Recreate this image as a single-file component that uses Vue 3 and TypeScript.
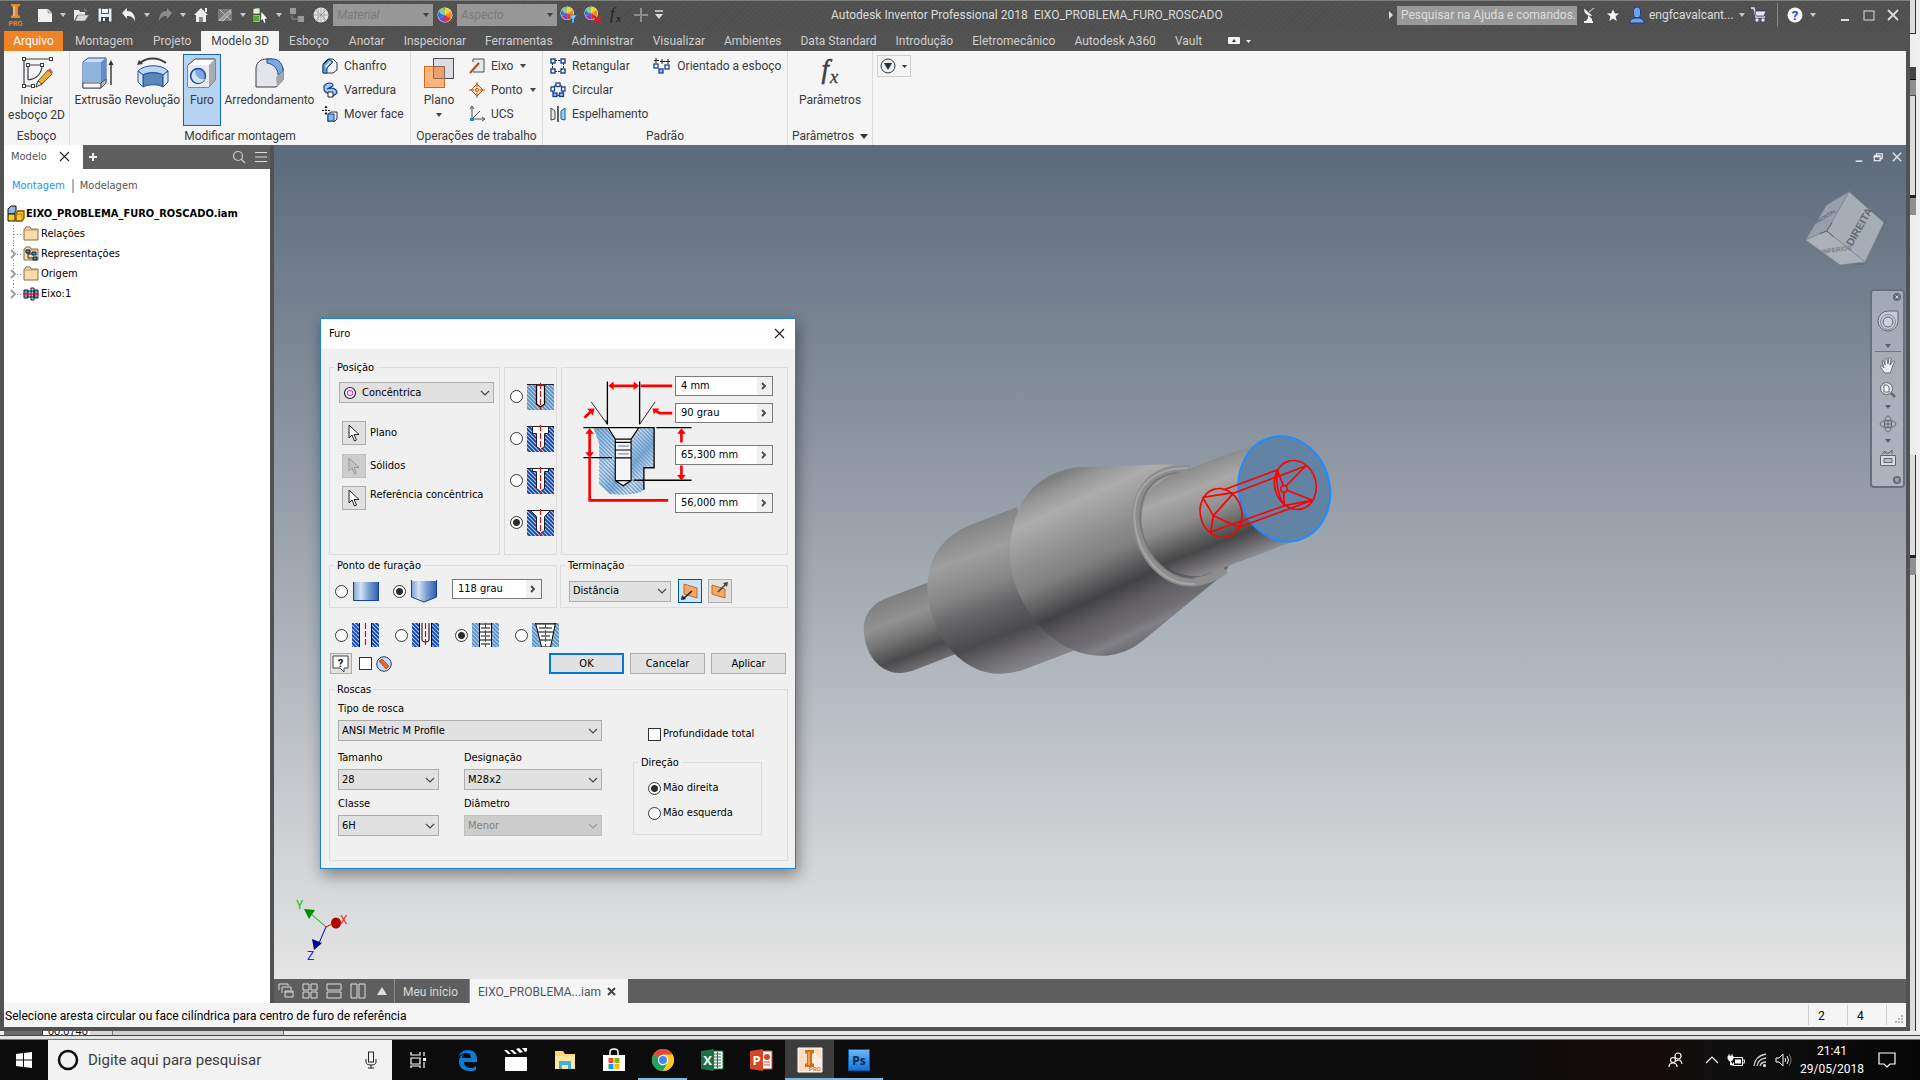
<script setup lang="ts">
import { h, ref } from 'vue'

type Glyph = [number, number, string]

const wheelSlices =
  '<circle cx="8" cy="8" r="7.5" fill="#eee"/><path d="M8 8V1A7 7 0 0 1 14 4.5Z" fill="#f5d21b"/><path d="M8 8L14 4.5A7 7 0 0 1 14 11.5Z" fill="#f08a1d"/><path d="M8 8L14 11.5A7 7 0 0 1 8 15Z" fill="#e0352b"/><path d="M8 8V15A7 7 0 0 1 2 11.5Z" fill="#8b3fc0"/><path d="M8 8L2 11.5A7 7 0 0 1 2 4.5Z" fill="#2f6fe0"/><path d="M8 8L2 4.5A7 7 0 0 1 8 1Z" fill="#46b535"/><circle cx="6" cy="5" r="3" fill="#fff" opacity=".35"/>'
const folder = '<path d="M1 3h1l1-2h4l1 2h7v11H1z" fill="#f7dda9" stroke="#8a6a45"/><path d="M1 4h14" stroke="#b8935d"/>'
const centreLine = '<path d="M13.500 0v27" stroke="#f00" stroke-width="1.200" stroke-dasharray="6 2"/>'

const glyphs: Record<string, Glyph> = {
  logo: [20, 24, '<path d="M5 1h9v2l-2 1v8l2 1v2H5v-2l2-1V4L5 3z" fill="#e08a2e"/><path d="M7 3h2v10H7z" fill="#f7b566"/><text x="9.500" y="23" text-anchor="middle" font-family="Roboto" font-weight="700" font-size="7" fill="#e08a2e">PRO</text>'],
  newdoc: [16, 16, '<path d="M1 2h10l4 4v9H1z" fill="#f1f1f4"/><path d="M11 2v4h4" fill="#c9c9d2" stroke="#8a8a92" stroke-width=".6"/>'],
  caret: [8, 8, '<path d="M1 2h6L4 6z" fill="#c9c9c9"/>'],
  open: [16, 16, '<path d="M1 3h5l1 2h5v3H4l-3 6z" fill="#e8e8e8"/><path d="M5 8h11l-4 6H2z" fill="#d9d9de" stroke="#555" stroke-width=".5"/><path d="M11 2l3 2" stroke="#7fb2e8"/>'],
  save: [16, 16, '<path d="M1 1h14v14H1z" fill="#e9eef2" stroke="#3f4a55"/><path d="M4 1h8v6H4z" fill="#4c5b68"/><path d="M5 2h6v4H5z" fill="#fff"/><path d="M4 10h8v5H4z" fill="#3c4650"/><path d="M6 11h2v3H6z" fill="#fff"/>'],
  undo: [16, 16, '<path d="M1 6l5-5v3c5 0 8 3 8 10-2-4-4-5-8-5v3z" fill="#f2f2f2"/>'],
  redo: [16, 16, '<path d="M15 6l-5-5v3c-5 0-8 3-8 10 2-4 4-5 8-5v3z" fill="#8b8b8b"/>'],
  home: [16, 16, '<path d="M8 1l7 7h-2v7H3V8H1z" fill="#ededed"/><path d="M6 10h4v5H6z" fill="#8c8c8c"/><path d="M12 1h2v4h-2z" fill="#ededed"/>'],
  bolt: [16, 16, '<path d="M1 2h14v12H1z" fill="#7a7a7a"/><path d="M2 13L13 3l1 3-8 8zM3 3l5 5M9 9l5 4" stroke="#bbb" fill="#9a9a9a"/>'],
  select3d: [18, 16, '<path d="M1 2l3-1h4v6H1zM1 8h7v7H1z" fill="#e2ecd9" stroke="#3b5a2a" stroke-width=".7"/><path d="M1 9h6v5H1z" fill="#58a43b"/><path d="M9 4l7 8h-3l1 4-2 .5-1.500-4L8.500 14z" fill="#fff" stroke="#333" stroke-width=".7"/>'],
  parts: [16, 16, '<path d="M1 1h6v6H1zM9 9h6v6H9z" fill="#9a9a9a"/><path d="M3 8v4h4" stroke="#8a8a8a" fill="none"/><circle cx="9" cy="12" r="1.500" fill="#8a8a8a"/>'],
  globe: [16, 16, '<circle cx="8" cy="8" r="7.500" fill="#e2e2e2"/><path d="M8 1v14M1 8h14M3 3l10 10M13 3L3 13M5 2v12M11 2v12" stroke="#8a8a8a" stroke-width=".6"/>'],
  wheel: [18, 18, '<g transform="translate(1 1)">' + wheelSlices + '</g>'],
  wheelDown: [18, 18, '<g transform="scale(.9)">' + wheelSlices + '</g><path d="M9 9h8l-3 4v4h-2v-4z" fill="#7fd0ff" stroke="#1b5a86" stroke-width=".6"/>'],
  wheelX: [18, 18, '<g transform="scale(.9)">' + wheelSlices + '</g><path d="M10 10l7 7m0-7l-7 7" stroke="#e01b1b" stroke-width="2"/>'],
  fxsmall: [18, 18, '<text x="2" y="13" font-family="Liberation Serif" font-style="italic" font-size="16" fill="#222">f</text><text x="8" y="16" font-family="Liberation Serif" font-style="italic" font-weight="700" font-size="10" fill="#222">x</text>'],
  plusbig: [16, 16, '<path d="M8 1v14M1 8h14" stroke="#8d8d8d" stroke-width="2"/>'],
  menuCaret: [10, 10, '<path d="M1 1h8" stroke="#ddd" stroke-width="1.500"/><path d="M1 4h8L5 9z" fill="#ddd"/>'],
  rightTri: [8, 10, '<path d="M2 1l4 4-4 4z" fill="#ddd"/>'],
  dish: [16, 18, '<path d="M3 2c-1 5 3 9 9 8z" fill="#f2f2f2" stroke="#333" stroke-width=".5"/><path d="M8 6l5-4" stroke="#e4e4e4"/><path d="M7 9l4 4v2H5l2-3z" fill="#f2f2f2"/><path d="M3 15h9v2H3z" fill="#f2f2f2"/>'],
  star: [16, 16, '<path d="M8 1l2 5h5l-4 3.500 1.500 5.500L8 12l-4.500 3L5 9.500 1 6h5z" fill="#f1f3f7" stroke="#2e3440" stroke-width=".7"/>'],
  user: [16, 18, '<rect x="4.500" y="1" width="7" height="11" rx="3.500" fill="#6ea0ef" stroke="#16315e" stroke-width=".8"/><path d="M1 17c0-4 3-5 7-5s7 1 7 5z" fill="#6ea0ef" stroke="#16315e" stroke-width=".8"/>'],
  cart: [16, 16, '<path d="M0 1h3l2 9h9" fill="none" stroke="#e4e6f5" stroke-width="1.500"/><path d="M4 4h11l-2 5H5z" fill="#e4e6f5" stroke="#1d2c6b" stroke-width=".7"/><circle cx="6" cy="13" r="1.700" fill="#e4e6f5"/><circle cx="12" cy="13" r="1.700" fill="#e4e6f5"/>'],
  help: [16, 16, '<circle cx="8" cy="8" r="7.500" fill="#f4f6fa"/><text x="8" y="12.500" text-anchor="middle" font-family="Roboto" font-weight="700" font-size="13" fill="#1e4fb0">?</text>'],
  min: [12, 14, '<path d="M2 12h8" stroke="#ddd" stroke-width="2"/>'],
  max: [12, 14, '<rect x="1" y="3" width="10" height="9" fill="none" stroke="#ddd"/>'],
  restore: [12, 14, '<path d="M4 5V3h7v6H9M1.500 5.500h7v6h-7zM1 6.500h8" fill="none" stroke="#fff" stroke-width="1.300"/>'],
  close: [12, 14, '<path d="M1 2l10 10m0-10L1 12" stroke="#ddd" stroke-width="1.800"/>'],
  closeDark: [12, 12, '<path d="M1 1l9 9m0-9l-9 9" stroke="#222" stroke-width="1.100"/>'],
  closeBold: [10, 10, '<path d="M1 1l7 7m0-7L1 8" stroke="#444" stroke-width="2"/>'],
  ribbonToggle: [26, 10, '<rect x="1" y="1" width="12" height="7" rx="1" fill="#f2f2f2"/><path d="M5 6h4L7 3z" fill="#333"/><path d="M19 4h5l-2.500 3z" fill="#eee"/>'],
  sketch: [34, 32, '<path d="M4 2h27M4 29h9M4 2v27M8 8h14M8 8v15M8 23C17 22 22 16 22 8" fill="none" stroke="#3b3f46" stroke-width="1.200"/><g fill="#fff" stroke="#3b3f46"><rect x="2.500" y=".5" width="3" height="3"/><rect x="29.500" y=".5" width="3" height="3"/><rect x="2.500" y="27.500" width="3" height="3"/><rect x="11.500" y="27.500" width="3" height="3"/><rect x="6.500" y="6.500" width="3" height="3"/><rect x="20.500" y="6.500" width="3" height="3"/></g><path d="M18 24L28 13l4 4-10 10-6 3z" fill="#f2ad2e" stroke="#75511a"/><path d="M28 13l4 4 1-2-3-4z" fill="#d2695b"/><path d="M18 24l-2 6 6-3z" fill="#eee" stroke="#444"/>'],
  extrude: [32, 32, '<path d="M1 5l5-4h18v24l-5 6H1z" fill="#cfe0f5" stroke="#1f4fa3"/><path d="M1 5h18v20H1z" fill="#8fb3de"/><path d="M19 5l5-4v24l-5 3z" fill="#5f8dc9"/><path d="M1 26h18v5H1z" fill="#f3f3f3" stroke="#555"/><path d="M19 26l5-4v4l-5 5z" fill="#bbb" stroke="#555"/><path d="M29 28V6" stroke="#333" stroke-width="1.400"/><path d="M29 3l-2.500 5h5z" fill="#333"/>'],
  revolve: [32, 32, '<path d="M3 6c7-6 18-6 26 0" fill="none" stroke="#3b3f46" stroke-width="2"/><path d="M0 8l2-5 4 4z" fill="#3b3f46"/><path d="M1 14c6-7 24-7 30 0l-5 4c-5-3-15-3-20 0z" fill="#bcd6f2" stroke="#1f4fa3"/><path d="M6 18c5-3 15-3 20 0v12c-5-3-15-3-20 0z" fill="#5c87bb" stroke="#1f4fa3"/><path d="M1 14l5 4v12l-5-5zM31 14l-5 4v12l5-5z" fill="#d7e6f6" stroke="#1f4fa3"/>'],
  hole: [30, 32, '<path d="M1 8l7-6h20v21l-6 7H1z" fill="#fff" stroke="#3b3f46"/><path d="M22 8l6-6v21l-6 7z" fill="#a9abb0"/><path d="M1 8h21v22H1z" fill="#e9ebef"/><circle cx="11" cy="19" r="7.500" fill="#7fa9dc" stroke="#1a4a9b" stroke-width="1.400"/><path d="M8 13a7 7 0 1 0 10 9c-6 1-10-3-10-9z" fill="#cfe3f8"/>'],
  fillet: [32, 32, '<path d="M2 12c0-6 4-10 11-10h5l11 9v12l-7 7H2z" fill="#e4e5e8" stroke="#3b3f46"/><path d="M13 2h6c6 0 10 5 10 12l-5 4c0-7-5-11-11-12z" fill="#7fa9dc" stroke="#1f4fa3"/><path d="M22 20l7-6v10l-6 6z" fill="#a2a4a9"/>'],
  chamfer: [16, 16, '<path d="M1 6l5-5h5l4 4v7l-4 3H1z" fill="#f0f2f5" stroke="#30363f"/><path d="M1 7l6-6 4 3-6 6v5H1z" fill="#6c9bd6" stroke="#173f8a"/><path d="M3 8l5-5 1 1-5 6z" fill="#cfe3f8"/>'],
  sweep: [16, 16, '<path d="M2 4c3-4 9-4 9 0l-6 3c6-2 10 0 10 4l-4 3c0-4-9-1-9-7z" fill="#aac9ec" stroke="#173f8a" stroke-width="1.200"/><path d="M6 10h5v5H6z" fill="#fff" stroke="#222"/>'],
  moveface: [16, 16, '<path d="M6 8l3-2h6v7l-3 3H6z" fill="#f0f0f0" stroke="#333"/><path d="M6 8h6v7H6z" fill="#7fbdf0" stroke="#173f8a"/><path d="M4 0v9M0 4.500h9" stroke="#111" stroke-dasharray="2 1"/><path d="M2.500 2L4 0l1.500 2zM2.500 7L4 9l1.500-2z" fill="#111"/>'],
  plane: [32, 32, '<rect x="10.500" y="1.500" width="20" height="20" fill="#dcdde1" stroke="#4a4e57"/><rect x="1.500" y="9.500" width="20" height="21" fill="#ffb27c" stroke="#d0681e"/><path d="M10.500 9.500h11v12h-11z" fill="#e9a070" stroke="#8b6a54"/>'],
  axis: [16, 16, '<path d="M4 4V1h11v13H4" fill="#e7e9ec" stroke="#4a4e57"/><path d="M1 15L10 5" stroke="#b04c20" stroke-width="2"/>'],
  point: [16, 16, '<path d="M8 2l6 6-6 6-6-6z" fill="#ffd7b5" stroke="#b3541f"/><circle cx="8" cy="8" r="1.500" fill="none" stroke="#b3541f"/><path d="M8 0v5M8 11v5M0 8h5M11 8h5" stroke="#b3541f"/>'],
  ucs: [16, 16, '<path d="M3 1v12h12M3 13l8-8" fill="none" stroke="#4a4e57"/><path d="M1 3l2-3 2 3M13 11l3 2-3 2" fill="none" stroke="#4a4e57"/><path d="M1 12h4v3H1z" fill="#2d7fe0"/>'],
  rectp: [16, 16, '<path d="M5 2.500h6M5 13.500h6M2.500 5v6M13.500 5v6" stroke="#333" stroke-dasharray="2 1"/><g fill="#fff" stroke="#173f8a" stroke-width="1.400"><rect x="1" y="1" width="4" height="4"/><rect x="11" y="1" width="4" height="4"/><rect x="1" y="11" width="4" height="4"/><rect x="11" y="11" width="4" height="4"/></g>'],
  circp: [16, 16, '<circle cx="8" cy="8" r="5.500" fill="none" stroke="#333"/><g fill="#fff" stroke="#173f8a" stroke-width="1.300"><rect x="6" y="1" width="4" height="3.500"/><rect x="1" y="5" width="3.500" height="4"/><rect x="11.500" y="5" width="3.500" height="4"/><rect x="3" y="11" width="4" height="3.500" fill="#8fc0f3"/><rect x="9.500" y="11" width="4" height="3.500" fill="#8fc0f3"/></g>'],
  mirror: [16, 16, '<path d="M8 0v16" stroke="#222" stroke-width="1.400"/><path d="M1 2l4 3v8l-4 1z" fill="#e4e6ea" stroke="#444"/><path d="M15 2l-4 3v8l4 1z" fill="#9fd0f5" stroke="#1f5aa0"/>'],
  sketchp: [18, 16, '<path d="M3 0v5M1 2.500h5M9 1v5M7 3.500h5M15 1v5M12 3.500h5" stroke="#222"/><g fill="#fff" stroke="#173f8a" stroke-width="1.300"><rect x="1" y="6" width="4" height="4"/><rect x="6" y="11" width="4" height="4" fill="#8fc0f3"/><rect x="12" y="7" width="4" height="4"/></g>'],
  fxbig: [36, 38, '<text x="8" y="25" font-family="Liberation Serif" font-style="italic" font-size="32" fill="#3b3f46" stroke="#3b3f46" stroke-width=".6">f</text><text x="18" y="31" font-family="Liberation Serif" font-style="italic" font-size="22" fill="#3b3f46" stroke="#3b3f46" stroke-width=".4">x</text>'],
  dropCircle: [30, 18, '<circle cx="9" cy="9" r="7" fill="#e8ebef" stroke="#333"/><path d="M5 6h8l-4 7z" fill="#26313d"/><path d="M23 8h5l-2.500 3z" fill="#333"/>'],
  caretDark: [8, 6, '<path d="M1 1h6L4 5z" fill="#444"/>'],
  caretWide: [8, 6, '<path d="M0 0h8L4 5z" fill="#333"/>'],
  plusTab: [10, 10, '<path d="M5 1v8M1 5h8" stroke="#eee" stroke-width="2"/>'],
  search: [14, 14, '<circle cx="6" cy="6" r="4.500" fill="none" stroke="#ccc" stroke-width="1.200"/><path d="M9 9l4 4" stroke="#ccc" stroke-width="1.200"/>'],
  burger: [14, 12, '<path d="M1 1.500h12M1 6h12M1 10.500h12" stroke="#ddd" stroke-width="1.200"/>'],
  asm: [18, 18, '<path d="M1 4l3-3h5v5l-2 3H1z" fill="#8fb8e8" stroke="#111"/><path d="M1 9h7v7H1z" fill="#ffc928" stroke="#111"/><path d="M9 8l2-2h6v7l-2 3H9z" fill="#ffc928" stroke="#7d4a08" stroke-width="1.300"/><path d="M9 9h6v7" fill="none" stroke="#b77a13"/>'],
  folder: [16, 16, folder],
  folderRep: [16, 16, folder + '<path d="M5 5v7M5 8h4M5 12h5" stroke="#222"/><path d="M3 4h4v3H3zM9 6h4v3H9zM10 11h4v3h-4z" fill="#3e87c6" stroke="#123"/>'],
  shaftIco: [16, 14, '<path d="M1 3h4v8H1zM11 3h4v8h-4z" fill="#6699c9" stroke="#10202f"/><path d="M5 4h6v6H5zM8 1h3v12H8z" fill="#b7d2eb" stroke="#10202f"/><path d="M0 7h16" stroke="#f00" stroke-width="1.200"/>'],
  chev: [8, 10, '<path d="M0 0h8v10H0z" fill="#fff"/><path d="M2 1l4 4-4 4" fill="none" stroke="#999" stroke-width="1.800"/>'],
  cursor: [14, 18, '<path d="M2 1v13l3-3 2.500 6 2-1L7 10.500h5z" fill="#fff" stroke="#222"/>'],
  cursorOff: [14, 18, '<path d="M2 1v13l3-3 2.500 6 2-1L7 10.500h5z" fill="#c2c2c2" stroke="#9a9a9a"/>'],
  down: [10, 6, '<path d="M1 1l4 4 4-4" fill="none" stroke="#444" stroke-width="1.100"/>'],
  more: [8, 8, '<path d="M1 1l3 3-3 3" fill="none" stroke="#444" stroke-width="1.800"/>'],
  concentric: [14, 14, '<circle cx="7" cy="7" r="5.500" fill="#fff" stroke="#222" stroke-width="1.200"/><circle cx="7" cy="7" r="2.800" fill="#fbe6fb" stroke="#e21be2"/>'],
  hDrill: [27, 27, '<path d="M0 2h27v25H0z" fill="url(#hatchLight)"/><path d="M9.500 2h8v19l-4 3-4-3z" fill="#fff" stroke="#000" stroke-width="1.300"/><path d="M0 1.500h10m8 0h9" stroke="#223"/>' + centreLine],
  hBore: [27, 27, '<path d="M0 2h27v25H0z" fill="url(#hatchDark)"/><path d="M5.500 1.500v7h4v13l4 3 4-3v-13h4v-7z" fill="#fff" stroke="#123" /><path d="M0 1.500h27" stroke="#223"/>' + centreLine],
  hSpot: [27, 27, '<path d="M0 2h27v25H0z" fill="url(#hatchDark)"/><path d="M5.500 1.500v3h4v17l4 3 4-3v-17h4v-3z" fill="#fff" stroke="#123"/><path d="M0 1.500h27" stroke="#223"/>' + centreLine],
  hSink: [27, 27, '<path d="M0 2h27v25H0z" fill="url(#hatchDark)"/><path d="M3.500 1.500l6 6v14l4 3 4-3v-14l6-6z" fill="#fff" stroke="#123"/><path d="M0 1.500h27" stroke="#223"/>' + centreLine],
  flat: [26, 20, '<path d="M0 1h26v19H0z" fill="url(#steel)"/><path d="M.5 1v18.500h25V1" fill="none" stroke="#14429e"/>'],
  tip: [26, 23, '<path d="M0 1h26v16l-13 5.500L0 17z" fill="url(#steel)"/><path d="M.5 0v17L13 22l12.500-5V0" fill="none" stroke="#14429e"/>'],
  termA: [20, 20, '<path d="M4 3l13 4v10L4 13z" fill="#f7a763" stroke="#c06a20"/><path d="M12 10L3 18" stroke="#222" stroke-width="1.600"/><path d="M1 19l1-5 4 4z" fill="#222"/>'],
  termB: [20, 20, '<path d="M2 4l13 4v9L2 13z" fill="#f7a763" stroke="#c06a20"/><path d="M8 11l8-8" stroke="#444" stroke-width="1.600"/><path d="M18 1l-1 5-4-4z" fill="#444"/>'],
  tSimple: [27, 24, '<path d="M0 0h7v24H0zM20 0h7v24h-7z" fill="url(#hatchDark)"/><path d="M7.500 0v24M19.500 0v24" stroke="#000"/><path d="M13.500 0v24" stroke="#f00" stroke-width="1.200" stroke-dasharray="6 2"/>'],
  tClear: [27, 24, '<path d="M0 0h7v24H0zM20 0h7v24h-7z" fill="url(#hatchDark)"/><path d="M7.500 0v24M19.500 0v24M10 0v17q0 2 3.500 2t3.500-2V0" fill="none" stroke="#000"/><path d="M13.500 0v24" stroke="#f00" stroke-width="1.200" stroke-dasharray="6 2"/>'],
  tTap: [27, 24, '<path d="M0 0h27v24H0z" fill="url(#hatchLight)"/><path d="M7 0h13v24H7z" fill="#fff"/><path d="M7.500 0v24M19.500 0v24M7 1h13M9 5h9M7 9h13M9 13h9M7 17h13M9 21h9" stroke="#000"/><path d="M13.500 0v24" stroke="#f00" stroke-dasharray="5 2"/>'],
  tTaper: [27, 24, '<path d="M0 0h27v24H0z" fill="url(#hatchLight)"/><path d="M3.500 0l6 24h9l5-24z" fill="#fff" stroke="#000"/><path d="M4 1h19M7 5h13M6 9h15M9 13h9M8 17h11" stroke="#000"/><path d="M13.500 0v24" stroke="#f00" stroke-dasharray="5 2"/>'],
  balloon: [18, 18, '<path d="M1 1h15v12h-4v4l-4-4H1z" fill="#fff" stroke="#444"/><text x="8.500" y="11.500" text-anchor="middle" font-family="Roboto" font-weight="700" font-size="11" fill="#111">?</text>'],
  noPreview: [16, 16, '<circle cx="8" cy="8" r="7.300" fill="#c5d9ec" stroke="#25406b"/><path d="M3 5l3-2 7 7-3 3z" fill="#e06a34" stroke="#8d3715" stroke-width=".6"/>'],
  cascade: [16, 16, '<path d="M1 7V1h9v2M4 10V4h9v3M7 8h8v6H7z" fill="none" stroke="#ddd"/><path d="M7 9h8" stroke="#ddd"/>'],
  tile4: [16, 16, '<path d="M1 1h6v6H1zM9 1h6v6H9zM1 9h6v6H1zM9 9h6v6H9z" fill="none" stroke="#ddd"/>'],
  tileH: [16, 16, '<path d="M1 1h14v6H1zM1 9h14v6H1z" fill="none" stroke="#ddd"/>'],
  tileV: [16, 16, '<path d="M1 1h6v14H1zM9 1h6v14H9z" fill="none" stroke="#ddd"/>'],
  upTri: [12, 10, '<path d="M1 9h10L6 1z" fill="#ddd"/>'],
  grip: [10, 10, '<path d="M7 1h2v2H7zM4 4h2v2H4zM7 4h2v2H7zM1 7h2v2H1zM4 7h2v2H4zM7 7h2v2H7z" fill="#b5b5b5"/>'],
  win: [16, 16, '<path d="M0 2l7-1v6.500H0zM8 1l8-1v7.500H8zM0 8.500h7V15l-7-1zM8 8.500h8V16l-8-1z" fill="#fff"/>'],
  cortana: [22, 22, '<circle cx="11" cy="11" r="9" fill="none" stroke="#111" stroke-width="2.600"/>'],
  mic: [14, 18, '<rect x="4.500" y="1" width="5" height="10" fill="none" stroke="#222"/><path d="M2 8v3q0 3 5 3t5-3V8M7 14v3M4 17h6" fill="none" stroke="#222"/>'],
  taskview: [18, 18, '<path d="M2 1v3h9V1M2 7h9v6H2zM2 17v-2h9v2M15 1v4M15 11v6" fill="none" stroke="#fff" stroke-width="1.200"/><path d="M14 7h3v3h-3z" fill="#fff"/>'],
  edge: [22, 22, '<path d="M2 10C3 4 7 1 12 1c6 0 9 4 9 9v3H8c0 4 3 6 7 6 2 0 4-1 5-2v4c-2 1-4 1-7 1-6 0-10-4-10-9 0-4 2-7 5-8-1 1-2 3-2 4h9c0-3-1-5-4-5-4 0-8 2-9 5z" fill="#0b7bd8"/>'],
  clap: [24, 24, '<path d="M1 9h22v14H1z" fill="#fff"/><path d="M0 2l4 4h3L3 2zM6 2l4 4h3L9 2zM12 1l4 4 3-1-4-4zM18 0l3 4 2-1V0z" fill="#fff"/>'],
  explorer: [22, 20, '<path d="M1 1h8l2 3h10v15H1z" fill="#f8d775"/><path d="M1 6h20v13H1z" fill="#ffe79b"/><path d="M5 11h12v8h-3v-4H8v4H5z" fill="#3fb0e6"/>'],
  store: [24, 24, '<path d="M1 7h22v16H1z" fill="#fff"/><path d="M8 7V4q0-3 4-3t4 3v3" fill="none" stroke="#fff" stroke-width="1.500"/><path d="M6.500 10h5v5h-5z" fill="#f25022"/><path d="M12.500 10h5v5h-5z" fill="#7fba00"/><path d="M6.500 16h5v5h-5z" fill="#00a4ef"/><path d="M12.500 16h5v5h-5z" fill="#ffb900"/>'],
  chrome: [24, 24, '<circle cx="12" cy="12" r="11" fill="#fbc91d"/><path d="M12 12L2.500 6.500A11 11 0 0 1 21.500 6.500z" fill="#dd4b3e"/><path d="M12 12L2.500 6.500A11 11 0 0 0 12 23l4.500-8.500z" fill="#1da262"/><path d="M12 6.500h9.500A11 11 0 0 1 12 23l5-8z" fill="#fbc91d"/><circle cx="12" cy="12" r="5.200" fill="#fff"/><circle cx="12" cy="12" r="4" fill="#4688f1"/>'],
  excel: [24, 24, '<path d="M12 3h11v18H12z" fill="#fff" stroke="#1e7145"/><path d="M14 6h7M14 9h7M14 12h7M14 15h7M14 18h7M17.500 4v16" stroke="#1e7145"/><path d="M1 3l13-2v22L1 21z" fill="#1e7145"/><text x="7.500" y="16.500" text-anchor="middle" font-family="Open Sans" font-weight="700" font-size="13" fill="#fff">X</text>'],
  ppt: [24, 24, '<path d="M12 3h11v18H12z" fill="#fff" stroke="#d24726"/><path d="M15 14h6M15 17h6" stroke="#d24726"/><circle cx="18" cy="9" r="3" fill="#d24726"/><path d="M1 3l13-2v22L1 21z" fill="#d24726"/><text x="7.500" y="16.500" text-anchor="middle" font-family="Open Sans" font-weight="700" font-size="13" fill="#fff">P</text>'],
  inventor: [26, 26, '<path d="M1 1h24v24H1z" fill="#fbdcc2" stroke="#fff"/><path d="M13 1l12 12v12H13z" fill="#fdeee0"/><path d="M8 3h9v3l-2 1v9l2 1v3H8v-3l2-1V7L8 6z" fill="#c9741c"/><path d="M11 5h2v13h-2z" fill="#efa54d"/><text x="18" y="24" text-anchor="middle" font-family="Roboto" font-weight="700" font-size="6" fill="#e07a14">PRO</text>'],
  ps: [22, 22, '<path d="M.5.5h21v21H.5z" fill="url(#psBlue)" stroke="#0a5ca8"/><text x="11" y="15.500" text-anchor="middle" font-family="Open Sans" font-weight="700" font-size="12" fill="#05284a">Ps</text>'],
  people: [18, 18, '<circle cx="11" cy="5" r="3" fill="none" stroke="#fff" stroke-width="1.200"/><circle cx="6" cy="9" r="2.500" fill="none" stroke="#fff" stroke-width="1.200"/><path d="M2 16q0-4 4-4t4 4M9 10q5-3 6 3" fill="none" stroke="#fff" stroke-width="1.200"/>'],
  up: [14, 10, '<path d="M1 8l6-6 6 6" fill="none" stroke="#fff" stroke-width="1.200"/>'],
  battery: [18, 14, '<path d="M4.500 4.500h11v8h-9v-3M16 7h1.500v3H16" fill="none" stroke="#fff"/><path d="M8 6.500h6v4H8z" fill="#fff"/><path d="M1 3h5v3L4.500 8h-2L1 6zM2 1v2M5 1v2M3.500 8v4h3" fill="#fff" stroke="#fff" stroke-width=".8"/>'],
  wifi: [16, 16, '<path d="M2 14Q3 4 14 2M5 14q1-7 9-8M8 14q1-4 6-4" fill="none" stroke="#ccc" stroke-width="1.300"/><circle cx="12.500" cy="13.500" r="1.500" fill="#fff"/>'],
  volume: [18, 14, '<path d="M1 5h3l4-4v12L4 9H1z" fill="none" stroke="#fff"/><path d="M10 5q1.500 2 0 4M12 3q3 4 0 8" fill="none" stroke="#fff"/><path d="M14 1q4 6 0 12" fill="none" stroke="#777"/>'],
  notify: [18, 18, '<path d="M1 2h16v11h-5l-3 3-3-3H1z" fill="none" stroke="#fff" stroke-width="1.200"/>'],
  navClose: [10, 10, '<circle cx="5" cy="5" r="4" fill="#626b75"/><path d="M3.500 3.500l3 3m0-3l-3 3" stroke="#d5d9df"/>'],
  navMenu: [10, 10, '<circle cx="5" cy="5" r="4" fill="#626b75"/><path d="M3 4h4M3.500 6h3" stroke="#d5d9df"/>'],
  navWheel: [24, 24, '<path d="M12 1h10v11a10 10 0 1 1-10-11z" fill="#c6ccd4" stroke="#5d6772"/><circle cx="12" cy="12" r="7.500" fill="none" stroke="#818b96"/><circle cx="12" cy="12" r="5" fill="#ccd1d8" stroke="#5d6772"/>'],
  navCaret: [8, 6, '<path d="M1 1h6L4 5z" fill="#59626d"/>'],
  hand: [18, 18, '<path d="M6 16c-2-2-4-5-5-7 1-1 2 0 4 2L3 4c1-1 2 0 3 4L6 2c1-1 2-1 2 0l1 5 1-6c1-1 2 0 2 1l-1 6 3-4c1 0 2 0 1 2-2 3-2 7-4 10z" fill="#eceef1" stroke="#5d6772" stroke-width=".9"/>'],
  zoomDoc: [18, 18, '<circle cx="7.500" cy="7.500" r="6" fill="#dfe3e8" stroke="#5d6772"/><path d="M5 4h3l2 2v5H5z" fill="#fff" stroke="#5d6772"/><path d="M12 12l4 4" stroke="#646d77" stroke-width="2.800"/>'],
  orbit: [18, 18, '<ellipse cx="9" cy="9" rx="8" ry="3.500" fill="none" stroke="#606a75"/><ellipse cx="9" cy="9" rx="3.500" ry="8" fill="none" stroke="#606a75"/><path d="M9 6v6M6 9h6" stroke="#606a75"/>'],
  lookAt: [18, 18, '<path d="M1.500 6.500h15v10h-15z" fill="#d9dde2" stroke="#5d6772"/><path d="M5 9.500h8v4H5z" fill="#b8bfc8" stroke="#5d6772"/><path d="M3 5l3-3v2h4l3-3v4" fill="none" stroke="#5d6772"/>'],
}

const Ico = (p: { n: string }) => {
  const [w, ht, body] = glyphs[p.n]
  return h('svg', { width: w, height: ht, viewBox: `0 0 ${w} ${ht}`, 'aria-hidden': 'true', innerHTML: body })
}

const quick1 = ['newdoc', 'caret', 'open', 'save', 'undo', 'caret', 'redo', 'caret', 'home', 'bolt', 'caret', 'select3d', 'caret', 'parts', 'globe']
const quick2 = ['wheelDown', 'wheelX', 'fxsmall', 'plusbig', 'menuCaret']
const isCaret = (n: string) => n === 'caret' || n === 'menuCaret'

const tabs = ['Montagem', 'Projeto', 'Modelo 3D', 'Esboço', 'Anotar', 'Inspecionar', 'Ferramentas', 'Administrar', 'Visualizar', 'Ambientes', 'Data Standard', 'Introdução', 'Eletromecânico', 'Autodesk A360', 'Vault']
const activeTab = ref('Modelo 3D')

const tree = [
  { icon: 'folder', label: 'Relações', open: false },
  { icon: 'folderRep', label: 'Representações', open: true },
  { icon: 'folder', label: 'Origem', open: true },
  { icon: 'shaftIco', label: 'Eixo:1', open: true },
]

const holeKinds = [
  { id: 'hDrill', name: 'Perfurado' },
  { id: 'hBore', name: 'Rebaixado' },
  { id: 'hSpot', name: 'Face rebaixada' },
  { id: 'hSink', name: 'Escareado' },
]
const holeKind = ref('hSink')
const dims = ref([
  { name: 'Diâmetro', value: '4 mm' },
  { name: 'Ângulo', value: '90 grau' },
  { name: 'Profundidade', value: '65,300 mm' },
  { name: 'Profundidade da rosca', value: '56,000 mm' },
])
const threadKinds = [
  { id: 'tSimple', name: 'Furo simples' },
  { id: 'tClear', name: 'Furo de folga' },
  { id: 'tTap', name: 'Furo roscado' },
  { id: 'tTaper', name: 'Furo roscado cônico' },
]
const threadKind = ref('tTap')
const pointKind = ref('tip')
const pointAngle = ref('118 grau')
const fullDepth = ref(false)
const noPreview = ref(false)
const direction = ref('right')
const helpQuery = ref('')
const taskQuery = ref('')

const apps = [
  { id: 'taskview', name: 'Visão de tarefas', state: '' },
  { id: 'edge', name: 'Edge', state: '' },
  { id: 'clap', name: 'Filmes', state: '' },
  { id: 'explorer', name: 'Explorador', state: '' },
  { id: 'store', name: 'Loja', state: '' },
  { id: 'chrome', name: 'Chrome', state: 'running' },
  { id: 'excel', name: 'Excel', state: '' },
  { id: 'ppt', name: 'PowerPoint', state: '' },
  { id: 'inventor', name: 'Inventor', state: 'running current' },
  { id: 'ps', name: 'Photoshop', state: 'running' },
]
</script>

<template>
  <div class="screen">
    <svg class="defs" width="0" height="0" aria-hidden="true">
      <defs>
        <pattern id="hatchDark" width="4" height="4" patternUnits="userSpaceOnUse">
          <rect width="4" height="4" fill="#b9cdf0" />
          <path d="M-1 -1L5 5M-1 3L1 5M3 -1L5 1" stroke="#0b3fae" stroke-width="1.7" />
        </pattern>
        <pattern id="hatchLight" width="4" height="4" patternUnits="userSpaceOnUse">
          <rect width="4" height="4" fill="#b4cfe9" />
          <path d="M-1 -1L5 5M-1 3L1 5M3 -1L5 1" stroke="#5b8fc2" stroke-width="1.6" />
        </pattern>
        <pattern id="hatchBig" width="12" height="12" patternUnits="userSpaceOnUse">
          <path d="M-3 -3L15 15M-3 9L3 15M9 -3L15 3" stroke="#4d86bd" stroke-width="3.500" />
        </pattern>
        <linearGradient id="steel">
          <stop offset="0" stop-color="#7d9fce" /><stop offset=".3" stop-color="#d3e2f4" />
          <stop offset=".6" stop-color="#7ba0d0" /><stop offset="1" stop-color="#2b5ba8" />
        </linearGradient>
        <linearGradient id="draftFill" x2="1" y2="1">
          <stop offset="0" stop-color="#8fb5da" /><stop offset=".4" stop-color="#dfeaf6" />
          <stop offset=".6" stop-color="#8fb5da" /><stop offset=".75" stop-color="#e6eff8" /><stop offset="1" stop-color="#7fa9d3" />
        </linearGradient>
        <linearGradient id="psBlue" x2="0" y2="1">
          <stop offset="0" stop-color="#6cb8ff" /><stop offset="1" stop-color="#0a74d8" />
        </linearGradient>
      </defs>
    </svg>

    <div class="upper">
      <div class="window">
        <header class="titlebar">
          <button class="logo" aria-label="Inventor"><Ico n="logo" /></button>
          <button v-for="(n, i) in quick1" :key="i" class="qi" :class="{ narrow: isCaret(n) }" :aria-label="n"><Ico :n="n" /></button>
          <span class="qsel"><select aria-label="Material"><option>Material</option></select><Ico n="caretDark" /></span>
          <button class="qi" aria-label="Cor"><Ico n="wheel" /></button>
          <span class="qsel"><select aria-label="Aspecto"><option>Aspecto</option></select><Ico n="caretDark" /></span>
          <button v-for="n in quick2" :key="n" class="qi" :class="{ narrow: isCaret(n) }" :aria-label="n"><Ico :n="n" /></button>
          <div class="caption"><span>Autodesk Inventor Professional 2018</span><span>EIXO_PROBLEMA_FURO_ROSCADO</span></div>
          <button class="qi narrow" aria-label="Expandir"><Ico n="rightTri" /></button>
          <input v-model="helpQuery" class="help-search" type="text" aria-label="Pesquisar" placeholder="Pesquisar na Ajuda e comandos." />
          <button class="qi" aria-label="Comunicação"><Ico n="dish" /></button>
          <button class="qi" aria-label="Favoritos"><Ico n="star" /></button>
          <button class="account"><Ico n="user" /><span>engfcavalcant...</span><Ico n="caret" /></button>
          <button class="qi cart" aria-label="Loja"><Ico n="cart" /></button>
          <button class="qi" aria-label="Ajuda"><Ico n="help" /></button>
          <button class="qi narrow gap" aria-label="Mais"><Ico n="caret" /></button>
          <button class="qi" aria-label="Minimizar"><Ico n="min" /></button>
          <button class="qi" aria-label="Maximizar"><Ico n="max" /></button>
          <button class="qi" aria-label="Fechar"><Ico n="close" /></button>
        </header>

        <nav class="tabs">
          <button class="tab file">Arquivo</button>
          <button v-for="t in tabs" :key="t" class="tab" :class="{ active: t === activeTab }" @click="activeTab = t">{{ t }}</button>
          <button class="tab toggle" aria-label="Minimizar faixa"><Ico n="ribbonToggle" /></button>
        </nav>

        <div class="ribbon">
          <section class="panel p-sketch">
            <div class="tools"><button class="big"><Ico n="sketch" /><span>Iniciar<br />esboço 2D</span></button></div>
            <h2>Esboço</h2>
          </section>
          <section class="panel p-modify">
            <div class="tools">
              <button class="big"><Ico n="extrude" /><span>Extrusão</span></button>
              <button class="big"><Ico n="revolve" /><span>Revolução</span></button>
              <button class="big on"><Ico n="hole" /><span>Furo</span></button>
              <button class="big"><Ico n="fillet" /><span>Arredondamento</span></button>
              <div class="stack">
                <button class="small"><Ico n="chamfer" />Chanfro</button>
                <button class="small"><Ico n="sweep" />Varredura</button>
                <button class="small"><Ico n="moveface" />Mover face</button>
              </div>
            </div>
            <h2>Modificar montagem</h2>
          </section>
          <section class="panel p-work">
            <div class="tools">
              <button class="big"><Ico n="plane" /><span>Plano</span><Ico n="caretDark" /></button>
              <div class="stack">
                <button class="small"><Ico n="axis" />Eixo<Ico n="caretDark" /></button>
                <button class="small"><Ico n="point" />Ponto<Ico n="caretDark" /></button>
                <button class="small"><Ico n="ucs" />UCS</button>
              </div>
            </div>
            <h2>Operações de trabalho</h2>
          </section>
          <section class="panel p-pattern">
            <div class="tools">
              <div class="stack">
                <button class="small"><Ico n="rectp" />Retangular</button>
                <button class="small"><Ico n="circp" />Circular</button>
                <button class="small"><Ico n="mirror" />Espelhamento</button>
              </div>
              <div class="stack"><button class="small"><Ico n="sketchp" />Orientado a esboço</button></div>
            </div>
            <h2>Padrão</h2>
          </section>
          <section class="panel p-param">
            <div class="tools"><button class="big"><Ico n="fxbig" /><span>Parâmetros</span></button></div>
            <h2>Parâmetros <Ico n="caretWide" /></h2>
          </section>
          <button class="drop" aria-label="Mais painéis"><Ico n="dropCircle" /></button>
        </div>

        <div class="body">
          <aside class="browser">
            <div class="bhead">
              <div class="btab"><span>Modelo</span><button aria-label="Fechar painel"><Ico n="closeDark" /></button></div>
              <button class="badd" aria-label="Adicionar"><Ico n="plusTab" /></button>
              <button class="bfind" aria-label="Pesquisar"><Ico n="search" /></button>
              <button class="bmenu" aria-label="Menu"><Ico n="burger" /></button>
            </div>
            <div class="modes"><a href="#" class="current-mode">Montagem</a><a href="#">Modelagem</a></div>
            <ul class="tree">
              <li class="root"><Ico n="asm" /><strong>EIXO_PROBLEMA_FURO_ROSCADO.iam</strong></li>
              <li v-for="r in tree" :key="r.label"><span class="twig"><Ico v-if="r.open" n="chev" /></span><Ico :n="r.icon" /><span>{{ r.label }}</span></li>
            </ul>
          </aside>

          <main class="work">
            <div class="canvas">
              <svg class="shaft" width="520" height="290" viewBox="0 0 1560 870" role="img" aria-label="Eixo">
                <defs>
                  <linearGradient id="gSmall" gradientUnits="userSpaceOnUse" x1="190" y1="545" x2="277" y2="772">
                    <stop offset="0" stop-color="#7e7e7e" /><stop offset=".3" stop-color="#929292" /><stop offset=".5" stop-color="#777" />
                    <stop offset=".76" stop-color="#4b4a4c" /><stop offset="1" stop-color="#77767a" />
                  </linearGradient>
                  <linearGradient id="gMid" gradientUnits="userSpaceOnUse" x1="380" y1="345" x2="540" y2="775">
                    <stop offset="0" stop-color="#838383" /><stop offset=".2" stop-color="#9e9e9e" /><stop offset=".42" stop-color="#858585" />
                    <stop offset=".56" stop-color="#666568" /><stop offset=".76" stop-color="#4a494b" /><stop offset=".9" stop-color="#6f6d72" /><stop offset="1" stop-color="#848388" />
                  </linearGradient>
                  <linearGradient id="gBig" gradientUnits="userSpaceOnUse" x1="192" y1="411" x2="426" y2="913">
                    <stop offset="0" stop-color="#7e7e7e" /><stop offset=".07" stop-color="#969696" /><stop offset=".17" stop-color="#adadad" />
                    <stop offset=".38" stop-color="#8f8f8f" /><stop offset=".5" stop-color="#808080" /><stop offset=".6" stop-color="#606062" />
                    <stop offset=".69" stop-color="#424143" /><stop offset=".8" stop-color="#626064" /><stop offset=".9" stop-color="#706e73" />
                    <stop offset=".95" stop-color="#828186" /><stop offset="1" stop-color="#727177" />
                  </linearGradient>
                  <linearGradient id="gNeck" gradientUnits="userSpaceOnUse" x1="197" y1="510" x2="310" y2="800">
                    <stop offset="0" stop-color="#8c8c8c" /><stop offset=".2" stop-color="#a9a9a9" /><stop offset=".45" stop-color="#8d8d8d" />
                    <stop offset=".62" stop-color="#666" /><stop offset=".76" stop-color="#474648" /><stop offset=".9" stop-color="#6e6c70" /><stop offset="1" stop-color="#8b8a8f" />
                  </linearGradient>
                </defs>
                <path fill="url(#gSmall)" d="M262 518L135 566C95 582 72 615 71 655C72 735 122 794 185 789Q205 786 218 782L345 733Z" />
                <path fill="url(#gMid)" d="M530 292L385 347C310 380 264 440 262 530C266 680 370 798 490 791Q525 788 550 779L700 722Z" />
                <path fill="url(#gBig)" d="M1055 169Q1000 160 900 166L720 172C650 176 600 210 567 247C512 315 497 430 521 510C562 640 670 745 800 737Q860 732 907 693L1140 502Q1160 485 1166 466Z" />
                <path fill="none" stroke="#8d8d8d" stroke-width="26" d="M1050 179C950 170 888 230 889 325C898 450 985 525 1065 516Q1115 510 1155 478" />
                <path fill="none" stroke="#b0b0b0" stroke-width="6" d="M1048 175C950 168 882 225 883 320C890 450 985 532 1065 521" opacity=".7" />
                <path fill="none" stroke="#6d6d6d" stroke-width="6" d="M1040 187C950 186 902 235 900 325C908 435 985 507 1062 505" opacity=".6" />
                <path fill="url(#gNeck)" d="M1240 105L1060 171C950 205 905 245 905 335C912 435 985 505 1085 498L1180 462L1360 394Z" />
                <ellipse cx="1333" cy="237" rx="136" ry="159" transform="rotate(-15 1333 237)" fill="#6283a4" stroke="#1f8cff" stroke-width="6" />
                <g fill="none" stroke="#f00" stroke-width="5">
                  <ellipse cx="1366" cy="225" rx="62" ry="74" transform="rotate(-15 1366 225)" />
                  <ellipse cx="1143" cy="309" rx="62" ry="74" transform="rotate(-15 1143 309)" />
                  <path d="M1150 240L1312 180M1180 250L1397 168M1112 366L1333 287M1197 352L1417 271" />
                  <path d="M1120 317L1088 262M1120 317L1180 250M1120 317L1197 352M1120 317L1112 366M1088 262L1180 248" />
                  <circle cx="1332" cy="237" r="10" />
                  <path d="M1330 227L1312 180M1338 228L1397 168M1341 241L1417 271M1331 247L1333 287M1312 180Q1304 240 1333 287L1417 271" />
                </g>
              </svg>

              <svg class="cube" width="90" height="90" viewBox="0 0 270 270" role="img" aria-label="Direita">
                <path d="M110 250L245 130L260 120L190 255Z" fill="#45525f" opacity=".35" />
                <path d="M147 35L252 128L195 246L80 153Z" fill="#a5adb7" stroke="#7c848e" stroke-width="2" />
                <path d="M147 35L80 75L17 180L80 153Z" fill="#969fab" stroke="#7c848e" stroke-width="2" />
                <path d="M17 180L80 153L195 246L120 255Z" fill="#aab1ba" stroke="#7c848e" stroke-width="2" />
                <path d="M80 153l-20 8M80 153l16-24M80 153l22 18" stroke="#59616b" stroke-width="3" />
                <text x="156" y="200" transform="rotate(-60 156 200)" font-family="Liberation Sans" font-weight="700" font-size="32" fill="#626b75">DIREITA</text>
                <text x="50" y="132" transform="rotate(-32 50 132)" font-family="Liberation Sans" font-weight="700" font-size="15" fill="#626b75">FRONTAL</text>
                <text x="66" y="222" transform="rotate(-8 66 222)" font-family="Liberation Sans" font-weight="700" font-size="19" fill="#7a828c">INFERIOR</text>
              </svg>

              <div class="mdi">
                <button aria-label="Minimizar documento"><Ico n="min" /></button>
                <button aria-label="Restaurar documento"><Ico n="restore" /></button>
                <button aria-label="Fechar documento"><Ico n="close" /></button>
              </div>

              <div class="navbar">
                <button class="end" aria-label="Fechar barra"><Ico n="navClose" /></button>
                <button class="tall" aria-label="Roda de navegação"><Ico n="navWheel" /></button>
                <button class="thin" aria-label="Opções da roda"><Ico n="navCaret" /></button>
                <hr />
                <button aria-label="Pan"><Ico n="hand" /></button>
                <button aria-label="Zoom"><Ico n="zoomDoc" /></button>
                <button class="thin" aria-label="Opções de zoom"><Ico n="navCaret" /></button>
                <button aria-label="Órbita"><Ico n="orbit" /></button>
                <button class="thin" aria-label="Opções de órbita"><Ico n="navCaret" /></button>
                <button aria-label="Olhar para"><Ico n="lookAt" /></button>
                <button class="end last" aria-label="Personalizar"><Ico n="navMenu" /></button>
              </div>

              <svg class="triad" width="64" height="68" viewBox="0 0 64 68" role="img" aria-label="Eixos X Y Z">
                <path d="M36 31L20 17" stroke="#0a0" /><path d="M36 31L46 26" stroke="#c00" /><path d="M36 31L29 47" stroke="#00b" />
                <path d="M14 13l11 1-6 9z" fill="#008c00" /><ellipse cx="46" cy="27" rx="5" ry="5.500" fill="#b30000" /><path d="M22 43l10 4-8 7z" fill="#00008c" />
                <text x="6" y="13" font-family="Roboto" font-size="12" fill="#0c0">Y</text>
                <text x="50" y="28" font-family="Roboto" font-size="12" fill="#f22">X</text>
                <text x="17" y="64" font-family="Roboto" font-size="12" fill="#22f">Z</text>
              </svg>

              <form class="dialog" aria-label="Furo" @submit.prevent>
                <div class="dtitle"><span>Furo</span><button type="button" aria-label="Fechar"><Ico n="closeDark" /></button></div>
                <div class="dbody">
                  <div class="row1">
                    <fieldset class="pos">
                      <legend>Posição</legend>
                      <span class="sel withicon"><Ico n="concentric" class="lead" /><select aria-label="Posição"><option>Concêntrica</option></select><Ico n="down" class="arr" /></span>
                      <label class="pick p1"><button type="button" class="sq"><Ico n="cursor" /></button><span>Plano</span></label>
                      <label class="pick p2"><button type="button" class="sq off" disabled><Ico n="cursorOff" /></button><span>Sólidos</span></label>
                      <label class="pick p3"><button type="button" class="sq"><Ico n="cursor" /></button><span>Referência concêntrica</span></label>
                    </fieldset>
                    <div class="box kinds" role="radiogroup" aria-label="Tipo de furo">
                      <label v-for="k in holeKinds" :key="k.id"><input v-model="holeKind" type="radio" name="hole" :value="k.id" :aria-label="k.name" /><Ico :n="k.id" /></label>
                    </div>
                    <div class="box dims">
                      <svg class="draft" viewBox="4 24 684 561" aria-hidden="true">
                        <path d="M100 205H284V325H253V392Q230 412 150 405L117 375V250Z" fill="url(#draftFill)" />
                        <path d="M100 205H284V325H253V392Q230 412 150 405L117 375V250Z" fill="url(#hatchBig)" />
                        <path d="M143 204L166 238V364L190 380L214 364V238L239 204Z" fill="#f5f5f5" />
                        <g fill="none" stroke="#000" stroke-width="4">
                          <path d="M142 63V193M240 63V193" />
                          <path d="M93 125L142 193L137 180M287 125L240 193" stroke-width="2.500" />
                          <path d="M69 203H284V325H253V392M69 294H156M291 203H398M222 363H398" />
                          <path d="M145 204L166 238V364L190 380L214 364V238L237 204M166 238H214M166 248H214M166 271H214M166 295H214M166 364H214" stroke-width="3.500" />
                        </g>
                        <path d="M175 259H207M175 283H207" stroke="#5a6f90" stroke-width="3" />
                        <g fill="none" stroke="#f00" stroke-width="8">
                          <path d="M155 76H228M243 76H339M290 152L300 159H339M72 173L92 154M88 215V285M88 294V424H327M367 215V248M367 318V353" />
                        </g>
                        <g fill="#f00">
                          <path d="M145 76l16-13v26zM238 76l-16-13v26zM279 145h21l-17 17zM103 145l-5 21-17-20zM88 205l-13 17h26zM88 295l-13-17h26zM367 205l-13 17h26zM367 364l-13-17h26z" />
                        </g>
                      </svg>
                      <div class="nums">
                        <span v-for="d in dims" :key="d.name" class="num"><input v-model="d.value" type="text" :aria-label="d.name" /><button type="button" :aria-label="'Opções ' + d.name"><Ico n="more" /></button></span>
                      </div>
                    </div>
                  </div>

                  <div class="row2">
                    <fieldset class="drill">
                      <legend>Ponto de furação</legend>
                      <div class="line">
                        <label><input v-model="pointKind" type="radio" name="pt" value="flat" aria-label="Plano" /><Ico n="flat" /></label>
                        <label><input v-model="pointKind" type="radio" name="pt" value="tip" aria-label="Ângulo" /><Ico n="tip" /></label>
                        <span class="num"><input v-model="pointAngle" type="text" aria-label="Ângulo da ponta" /><button type="button" aria-label="Opções"><Ico n="more" /></button></span>
                      </div>
                    </fieldset>
                    <fieldset class="term">
                      <legend>Terminação</legend>
                      <div class="line">
                        <span class="sel"><select aria-label="Terminação"><option>Distância</option></select><Ico n="down" class="arr" /></span>
                        <button type="button" class="sq on" aria-label="Direção 1"><Ico n="termA" /></button>
                        <button type="button" class="sq" aria-label="Direção 2"><Ico n="termB" /></button>
                      </div>
                    </fieldset>
                  </div>

                  <div class="row3" role="radiogroup" aria-label="Rosca">
                    <label v-for="k in threadKinds" :key="k.id"><input v-model="threadKind" type="radio" name="thread" :value="k.id" :aria-label="k.name" /><Ico :n="k.id" /></label>
                  </div>

                  <div class="row4">
                    <button type="button" class="helpb" aria-label="Ajuda"><Ico n="balloon" /></button>
                    <label><input v-model="noPreview" type="checkbox" aria-label="Sem visualização" /><Ico n="noPreview" /></label>
                    <button type="submit" class="cmd ok">OK</button>
                    <button type="button" class="cmd">Cancelar</button>
                    <button type="button" class="cmd">Aplicar</button>
                  </div>

                  <fieldset class="threads">
                    <legend>Roscas</legend>
                    <div class="tgrid">
                      <div class="tleft">
                        <label class="fld wide"><span>Tipo de rosca</span><span class="sel"><select><option>ANSI Metric M Profile</option></select><Ico n="down" class="arr" /></span></label>
                        <label class="fld"><span>Tamanho</span><span class="sel"><select><option>28</option></select><Ico n="down" class="arr" /></span></label>
                        <label class="fld"><span>Designação</span><span class="sel"><select><option>M28x2</option></select><Ico n="down" class="arr" /></span></label>
                        <label class="fld"><span>Classe</span><span class="sel"><select><option>6H</option></select><Ico n="down" class="arr" /></span></label>
                        <label class="fld off"><span>Diâmetro</span><span class="sel"><select disabled><option>Menor</option></select><Ico n="down" class="arr" /></span></label>
                      </div>
                      <div class="tright">
                        <label class="full"><input v-model="fullDepth" type="checkbox" /><span>Profundidade total</span></label>
                        <fieldset class="dir">
                          <legend>Direção</legend>
                          <label><input v-model="direction" type="radio" name="dir" value="right" /><span>Mão direita</span></label>
                          <label><input v-model="direction" type="radio" name="dir" value="left" /><span>Mão esquerda</span></label>
                        </fieldset>
                      </div>
                    </div>
                  </fieldset>
                </div>
              </form>
            </div>

            <div class="doctabs">
              <button v-for="n in ['cascade', 'tile4', 'tileH', 'tileV', 'upTri']" :key="n" :aria-label="n"><Ico :n="n" /></button>
              <a href="#" class="dt">Meu início</a>
              <div class="dt active"><span>EIXO_PROBLEMA...iam</span><button aria-label="Fechar"><Ico n="closeBold" /></button></div>
            </div>
          </main>
        </div>

        <footer class="status"><span class="msg">Selecione aresta circular ou face cilíndrica para centro de furo de referência</span><span class="cell">2</span><span class="cell">4</span><span class="cell last"><Ico n="grip" /></span></footer>
      </div>

      <div class="behind"><i class="b1"></i><i class="b2"></i><i class="b3"></i><i class="b4"></i><i class="b5"></i><i class="b4 second"></i></div>
    </div>
    <div class="under"><i class="u1"></i><i class="u2">00,0740</i><i class="u3"></i><i class="u4"></i></div>

    <footer class="taskbar">
      <button class="start" aria-label="Iniciar"><Ico n="win" /></button>
      <label class="tsearch"><Ico n="cortana" /><input v-model="taskQuery" type="text" placeholder="Digite aqui para pesquisar" aria-label="Pesquisar no Windows" /><Ico n="mic" /></label>
      <button v-for="a in apps" :key="a.id" class="app" :class="a.state" :aria-label="a.name"><Ico :n="a.id" /></button>
      <div class="tray">
        <button class="ppl" aria-label="Pessoas"><Ico n="people" /></button>
        <button aria-label="Ícones ocultos"><Ico n="up" /></button>
        <button aria-label="Bateria"><Ico n="battery" /></button>
        <button aria-label="Rede"><Ico n="wifi" /></button>
        <button aria-label="Volume"><Ico n="volume" /></button>
        <div class="clock"><time>21:41</time><time>29/05/2018</time></div>
        <button class="note" aria-label="Notificações"><Ico n="notify" /></button>
      </div>
    </footer>
  </div>
</template>

<style>
html, body { margin: 0; height: 100%; overflow: hidden; background: #0c0c0c; }
</style>

<style scoped>
.screen { display: flex; flex-direction: column; height: 100vh; font: 12px/15px Roboto, "Noto Sans", sans-serif; color: #3a3a3a; }
.screen * { box-sizing: border-box; }
.defs { position: absolute; }
svg { display: block; flex: none; }
button { font: inherit; color: inherit; background: none; border: 0; padding: 0; margin: 0; display: flex; align-items: center; justify-content: center; }
input, select { font: inherit; color: inherit; margin: 0; border-radius: 0; }
select { appearance: none; }
a { color: inherit; text-decoration: none; }

.upper { flex: 1; display: flex; min-height: 0; }
.window { flex: 1; min-width: 0; display: flex; flex-direction: column; background: #525252; border-top: 1px solid #7d7f7d; padding: 0 4px 4px; }

.titlebar { height: 30px; display: flex; align-items: center; color: #dcdcdc; background: repeating-linear-gradient(135deg, #525252 0 3px, #4d4d4d 3px 4px); margin: 0 -4px; padding: 0 5px 2px 4px; }
.logo { width: 29px; height: 28px; padding-right: 5px; }
.qi { width: 24px; height: 24px; }
.qi.narrow { width: 12px; }
.qsel { width: 100px; height: 22px; background: #979797; display: flex; align-items: center; padding-right: 3px; color: #7b7b7b; }
.qsel select { flex: 1; min-width: 0; border: 0; background: none; font-style: italic; padding: 0 4px; }
.caption { flex: 1; min-width: 0; display: flex; gap: 6px; padding-left: 166px; white-space: nowrap; overflow: hidden; }
.help-search { width: 180px; height: 19px; border: 0; background: #999; padding: 0 2px 0 4px; color: #eee; }
.help-search::placeholder { color: #dcdcdc; opacity: 1; }
.account { width: 122px; height: 24px; justify-content: flex-start; padding-left: 4px; gap: 4px; }
.cart { width: 31px; border-right: 1px solid #858585; padding-right: 6px; margin-right: 5px; }
.qi.gap { margin-right: 14px; }

.tabs { height: 20px; display: flex; color: #cfcfcf; }
.tab { padding: 0 10px; }
.tab:nth-child(n+6) { padding: 0 9px 0 10px; }
.tab.file { width: 59px; padding: 0; background: #f08326; color: #fff; margin-right: 2px; }
.tab.active { background: #f5f5f5; color: #444; }
.tab.toggle { padding: 0 16px; }

.ribbon { height: 94px; background: #f5f5f5; display: flex; align-items: flex-start; }
.panel { height: 94px; display: flex; flex-direction: column; border-right: 1px solid #dcdcdc; }
.panel h2 { margin: 0; font: inherit; display: flex; gap: 6px; align-items: center; justify-content: center; height: 17px; }
.tools { flex: 1; display: flex; padding-top: 3px; }
.p-sketch { width: 66px; }
.p-modify { width: 341px; }
.p-modify .tools { padding-left: 2px; }
.p-work { width: 132px; }
.p-work .tools { padding-left: 6px; }
.p-pattern { width: 245px; }
.p-pattern .tools { padding-left: 3px; }
.p-param { width: 85px; }
.p-sketch .big, .p-param .big { flex: 1; }
.big { flex-direction: column; justify-content: flex-start; height: 72px; border: 1px solid transparent; padding: 2px 1px 0; min-width: 38px; white-space: nowrap; gap: 4px; }
.big svg:first-child { height: 32px; }
.big.on { border-color: #1564b5; background: #b5d4f2; margin-left: 2px; }
.p-modify .big:first-child { width: 52px; }
.p-modify .big:nth-child(2) { width: 57px; }
.p-modify .big:nth-child(4) { width: 97px; }
.p-work .big { width: 44px; margin-right: 4px; }
.stack { display: flex; flex-direction: column; margin-left: 4px; }
.small { height: 24px; gap: 6px; justify-content: flex-start; white-space: nowrap; }
.p-pattern .stack:last-child { margin-left: 5px; }
.drop { border: 1px solid #cfcfcf; width: 34px; height: 22px; margin: 4px; }

.body { flex: 1; min-height: 0; display: flex; }
.browser { width: 266px; margin-right: 4px; background: #fff; display: flex; flex-direction: column; font: 11px/14px "DejaVu Sans Condensed", "DejaVu Sans", sans-serif; color: #000; }
.bhead { height: 24px; display: flex; background: #5e5e5e; }
.bhead .badd { width: 20px; margin-right: auto; }
.bhead .bfind { width: 27px; }
.bhead .bmenu { width: 18px; }
.btab { width: 79px; background: #fff; display: flex; align-items: center; justify-content: space-between; padding: 0 12px 0 7px; color: #555; }
.modes { display: flex; padding: 10px 8px; height: 34px; color: #555; }
.modes a { padding-right: 7px; border-right: 2px solid #b5b5b5; }
.modes a + a { padding-left: 6px; border: 0; }
.modes .current-mode { color: #1b95ee; }
.tree { list-style: none; margin: 0; padding: 1px 0 0; }
.tree li { height: 20px; display: flex; align-items: center; gap: 2px; }
.tree .root { padding-left: 3px; gap: 1px; }
.twig { width: 17px; height: 20px; display: flex; align-items: center; padding-left: 5px; background: repeating-linear-gradient(0deg, #888 0 1px, transparent 1px 3px) 9px 0 / 1px 100% no-repeat, repeating-linear-gradient(90deg, #888 0 1px, transparent 1px 3px) 10px 10px / 7px 1px no-repeat; }
.tree li:last-child .twig { background-size: 1px 10px, 7px 1px; }

.work { flex: 1; min-width: 0; display: flex; flex-direction: column; }
.canvas { flex: 1; min-height: 0; position: relative; background: linear-gradient(#5b6a7c, #e5e5e5); overflow: hidden; }
.shaft { position: absolute; left: 566px; top: 265px; }
.cube { position: absolute; right: 16px; top: 35px; }
.mdi { position: absolute; right: 0; top: 2px; display: flex; }
.mdi button { width: 19px; height: 20px; }
.mdi svg { width: 10px; height: 12px; }
.navbar { position: absolute; right: 1px; top: 144px; width: 35px; height: 199px; border: 2px solid #67717d; border-radius: 4px; background: rgba(190, 197, 207, .6); display: flex; flex-direction: column; align-items: center; }
.navbar button { height: 24px; }
.navbar .end { height: 12px; align-self: flex-end; padding-right: 1px; }
.navbar .last { margin-top: auto; }
.navbar .tall { height: 38px; }
.navbar .thin { height: 10px; }
.navbar hr { width: 26px; margin: 0 0 2px; border: 0; border-top: 1px solid #6c7682; }
.triad { position: absolute; left: 16px; bottom: 15px; }

.doctabs { height: 24px; background: #5e5e5e; display: flex; color: #d8d8d8; }
.doctabs > button { width: 24px; }
.dt { display: flex; align-items: center; padding: 2px 11px 0 8px; border-left: 1px solid #8a8a8a; }
.dt.active { background: #f5f5f5; color: #555; gap: 6px; }

.status { height: 24px; background: #f5f5f5; color: #000; display: flex; align-items: center; }
.msg { flex: 1; padding-left: 1px; padding-top: 2px; }
.cell { height: 20px; width: 39px; border-left: 1px solid #ccc; padding: 4px 9px 0; }
.cell.last { width: 20px; padding: 9px 7px; }

.behind { width: 10px; background: #dcdcdc; border-right: 4px solid #efefef; display: flex; flex-direction: column; box-shadow: inset -1px 0 #333; }
.behind i { display: block; }
.b1 { height: 33px; }
.b2 { height: 34px; background: #ececec; border-top: 1px solid #333; }
.b3 { height: 29px; background: linear-gradient(#444 0 12px, #000 12px 13px, #8f8f8f 13px); border-bottom: 1px solid #555; }
.b4 { height: 20px; margin-top: 99px; background: #8f8f8f; border-top: 3px solid #222; }
.b5 { height: 240px; background: #ececec; }
.b4.second { margin-top: 100px; }
.under { height: 9px; display: flex; align-items: flex-start; background: linear-gradient(#ececec 0 4px, #444 4px 5px, #e4e4e4 5px 8px, #777 8px); padding-left: 4px; overflow: hidden; }
.under i { display: block; height: 4px; overflow: hidden; }
.u1 { width: 38px; background: #6b6b6b; }
.u2 { width: 48px; background: #fff; border-left: 1px solid #333; font: normal 11px/1px "Liberation Sans", sans-serif; padding-left: 5px; color: #000; }
.u3 { width: 22px; background: #d8d8d8; }
.u4 { width: 172px; background: #d0d0d0; border: solid #777; border-width: 0 1px; }

.dialog { position: absolute; left: 46px; top: 173px; width: 476px; background: #f0f0f0; border: 1px solid #1883d7; box-shadow: 2px 6px 14px rgba(0, 0, 0, .4); font: 11px/14px "DejaVu Sans Condensed", "DejaVu Sans", sans-serif; color: #000; }
.dtitle { height: 30px; background: #fff; display: flex; align-items: center; justify-content: space-between; padding: 0 8px; }
.dtitle button { width: 14px; height: 14px; }
.dbody { padding: 11px 7px 7px 8px; }
fieldset { min-width: 0; margin: 0; padding: 0; border: 1px solid #dcdcdc; }
legend { padding: 1px 3px 0; margin-left: 4px; height: 14px; }
.box { border: 1px solid #dcdcdc; margin-top: 7px; }
.dialog label { display: flex; align-items: center; }
.row1 { display: grid; grid-template-columns: 171px 53px 1fr; gap: 4px; height: 195px; }
.pos > .sel { width: 155px; margin: 8px 0 18px 9px; }
.pick { margin: 0 0 8px 12px; gap: 4px; height: 24px; }
.pick.p2 { margin: 9px 0 8px 12px; }
.pick.p3 span { margin-bottom: 6px; }
.sel { display: grid; height: 21px; align-items: center; width: 100%; }
.sel > * { grid-area: 1 / 1; }
.sel select { width: 100%; height: 21px; border: 1px solid #adadad; background: #e1e1e1; padding: 0 20px 0 3px; }
.sel .arr { justify-self: end; margin-right: 4px; pointer-events: none; z-index: 1; }
.sel .lead { margin-left: 4px; z-index: 1; }
.withicon select { padding-left: 22px; }
.sq { width: 24px; height: 24px; background: #e1e1e1; border: 1px solid #adadad; flex: none; }
.sq.off { background: #ccc; border-color: #bfbfbf; }
.sq.on { background: #cce4f7; border-color: #005499; }
input[type="radio"] { appearance: none; width: 13px; height: 13px; flex: none; border: 1px solid #333; border-radius: 50%; background: #fff; }
input[type="radio"]:checked { background: radial-gradient(circle, #2b2b2b 0 3px, #fff 4px); }
input[type="checkbox"] { appearance: none; width: 13px; height: 13px; flex: none; border: 1px solid #333; background: #fff; }
input[type="checkbox"]:checked { background: #333; }
.kinds { display: flex; flex-direction: column; gap: 15px; padding: 15px 0 0 5px; }
.kinds label { height: 27px; gap: 4px; }
.dims { display: grid; }
.dims > * { grid-area: 1 / 1; }
.draft { width: 100%; height: 100%; }
.nums { justify-self: end; margin-right: 14px; padding-top: 8px; display: flex; flex-direction: column; }
.num { display: flex; width: 98px; height: 20px; border: 1px solid #7a7a7a; background: #fff; }
.num input { flex: 1; min-width: 0; border: 0; background: none; padding: 0 5px; }
.num button { width: 15px; background: #f0f0f0; }
.nums .num { margin-bottom: 7px; }
.nums .num:nth-child(2) { margin-bottom: 22px; }
.nums .num:nth-child(3) { margin-bottom: 28px; }
.row2 { display: grid; grid-template-columns: 228px 1fr; gap: 3px; margin-top: 3px; height: 50px; }
.line { display: flex; align-items: center; height: 38px; margin-bottom: -4px; }
.drill .line { padding-left: 5px; }
.drill label { gap: 5px; margin-right: 14px; height: 24px; }
.drill .num { width: 90px; margin: 0 0 4px 1px; }
.term .line { padding-left: 8px; }
.term .sel { width: 102px; margin-right: 7px; }
.term .sq { margin-right: 6px; }
.row3 { display: flex; gap: 16px; padding-left: 6px; margin-top: 15px; height: 24px; }
.row3 label { gap: 4px; }
.row4 { display: flex; align-items: center; margin-top: 6px; height: 21px; padding: 0 2px 0 1px; gap: 6px; }
.row4 label { gap: 4px; margin: 0 auto 0 1px; }
.helpb { width: 22px; height: 21px; background: #e1e1e1; border: 1px solid #adadad; }
.cmd { width: 75px; height: 21px; background: #e1e1e1; border: 1px solid #adadad; }
.cmd.ok { border: 2px solid #0078d7; }
.threads { margin-top: 8px; height: 179px; }
.tgrid { display: flex; gap: 31px; padding: 6px 0 0 8px; }
.tleft { width: 264px; display: grid; grid-template-columns: 101px 138px; column-gap: 25px; row-gap: 7px; align-content: start; }
.dialog .fld { flex-direction: column; align-items: flex-start; gap: 4px; }
.fld.wide { grid-column: 1 / 3; margin-bottom: 3px; }
.fld.off select { background: #ccc; border-color: #bfbfbf; color: #838383; opacity: 1; }
.fld.off .arr { opacity: .35; }
.tright { flex: 1; padding-top: 25px; }
.full { gap: 2px; padding-left: 15px; }
.dir { width: 129px; height: 80px; margin-top: 14px; padding: 12px 0 0 14px; }
.dir legend { margin-left: -10px; }
.dir label { gap: 2px; height: 14px; margin-bottom: 11px; }

.taskbar { height: 40px; background: linear-gradient(90deg, #0c0c0c 0 78%, #160b0b 85%, #101010 90%, #060606); display: flex; align-items: stretch; color: #fff; }
.start { width: 48px; }
.tsearch { width: 344px; background: #f2f2f2; display: flex; align-items: center; padding: 0 14px 0 9px; color: #333; margin-right: 1px; }
.tsearch input { flex: 1; min-width: 0; border: 0; background: none; font-size: 15px; padding: 0 0 0 9px; outline: 0; }
.tsearch input::placeholder { color: #3d3d3d; opacity: 1; }
.app { width: 49px; border-bottom: 2px solid transparent; border-top: 2px solid transparent; }
.app:first-of-type { width: 47px; }
.running { border-bottom-color: #76b9ed; }
.current { background: #3d3d3d; border-top-color: #3d3d3d; }
.tray { margin-left: auto; display: flex; align-items: center; padding-right: 14px; }
.tray button { width: 24px; height: 40px; }
.tray .ppl { margin-right: 12px; }
.clock { display: flex; flex-direction: column; align-items: center; width: 72px; gap: 2px; line-height: 16px; }
.tray .note { width: 38px; }
</style>
